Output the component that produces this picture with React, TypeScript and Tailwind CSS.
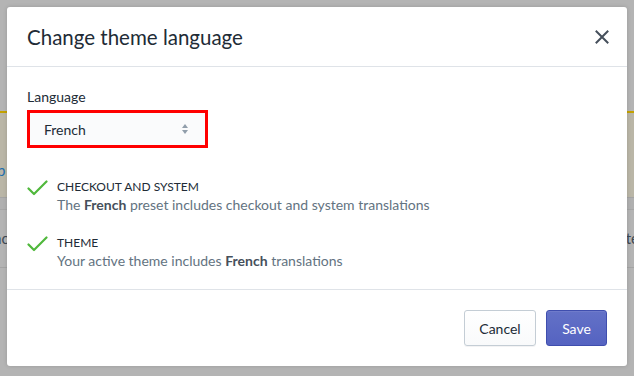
import React from "react";

function CheckIcon() {
  return (
    <svg width="21" height="16" viewBox="0 0 21 16" className="shrink-0 mt-[1px]">
      <path d="M1.5 8.5 L7 14 L19.5 1.5" fill="none" stroke="#50b83c" strokeWidth="2.2" strokeLinecap="round" strokeLinejoin="round" />
    </svg>
  );
}

function CloseIcon() {
  return (
    <svg width="14" height="14" viewBox="0 0 14 14">
      <path d="M1.5 1.5 L12.5 12.5 M12.5 1.5 L1.5 12.5" stroke="#454f5b" strokeWidth="2" strokeLinecap="square" />
    </svg>
  );
}

function SelectArrows() {
  return (
    <svg width="8" height="12" viewBox="0 0 8 12">
      <path d="M4 1 L7 5 H1 Z" fill="#919eab" />
      <path d="M4 11 L7 7 H1 Z" fill="#919eab" />
    </svg>
  );
}

const items = [
  {
    title: "CHECKOUT AND SYSTEM",
    body: (
      <>
        The <b className="font-bold text-[#454f5b]">French</b> preset includes checkout and system translations
      </>
    ),
  },
  {
    title: "THEME",
    body: (
      <>
        Your active theme includes <b className="font-bold text-[#454f5b]">French</b> translations
      </>
    ),
  },
];

export default function App() {
  return (
    <div className="relative w-[634px] h-[376px] overflow-hidden bg-[#b4b4b4] font-['Lato','Liberation_Sans',sans-serif]">
      {/* page behind the backdrop */}
      <div className="flex flex-col pt-[111px]">
        <div className="h-[2px] bg-[#c4a200]" />
        <div className="h-[84px] bg-[#bab6a7] flex items-center">
          <span className="ml-[-3px] mt-[30px] text-[15px] text-[#1f6fae]">p</span>
        </div>
        <div className="h-px bg-[#a4a4a4]" />
        <div className="h-[11px] bg-[#b0b0b0]" />
        <div className="h-px bg-[#a6a6a6]" />
        <div className="h-[57px] flex items-center justify-between text-[15px] text-[#3f4a56]">
          <span className="ml-[-6px]">ac</span>
          <span className="mr-[-5px]">te</span>
        </div>
        <div className="h-px bg-[#a4a4a4]" />
      </div>

      {/* modal */}
      <div className="absolute left-[7px] top-[7px] w-[620px] h-[359px] bg-white rounded-[3px] shadow-[0_0_4px_rgba(0,0,0,0.15)] flex flex-col">
        <div className="h-[60px] shrink-0 flex items-center justify-between pl-5 pr-[18px] border-b border-[#dfe3e8]">
          <h2 className="text-[20.5px] text-[#212b36] leading-6">Change theme language</h2>
          <CloseIcon />
        </div>

        <div className="flex-1 px-5 pt-5 pb-[18px] border-b border-[#dfe3e8]">
          <div className="text-[14px] leading-5 text-[#212b36]">Language</div>
          <div className="mt-[3px] w-[181px] h-[38px] border-[3px] border-[#f00] bg-[#fafbfc] flex items-center justify-between pl-[14px] pr-[16px]">
            <span className="text-[14px] text-[#212b36]">French</span>
            <SelectArrows />
          </div>

          <div className="mt-[31px] flex flex-col gap-5">
            {items.map((it) => (
              <div key={it.title} className="flex gap-[9px]">
                <CheckIcon />
                <div>
                  <div className="text-[12px] leading-4 text-[#212b36]">{it.title}</div>
                  <div className="text-[14px] leading-5 text-[#637381]">{it.body}</div>
                </div>
              </div>
            ))}
          </div>
        </div>

        <div className="h-[76px] shrink-0 flex items-center justify-end gap-[10px] px-5">
          <button className="h-[36px] w-[72px] rounded-[3px] border border-[#c4cdd5] bg-gradient-to-b from-white to-[#f9fafb] text-[14px] text-[#212b36] shadow-[0_1px_0_rgba(22,29,37,0.05)]">
            Cancel
          </button>
          <button className="h-[36px] w-[61px] rounded-[3px] border border-[#3f4eae] bg-gradient-to-b from-[#6371c7] to-[#5563c1] text-[14px] text-white shadow-[inset_0_1px_0_#6f7bcb]">
            Save
          </button>
        </div>
      </div>
    </div>
  );
}
